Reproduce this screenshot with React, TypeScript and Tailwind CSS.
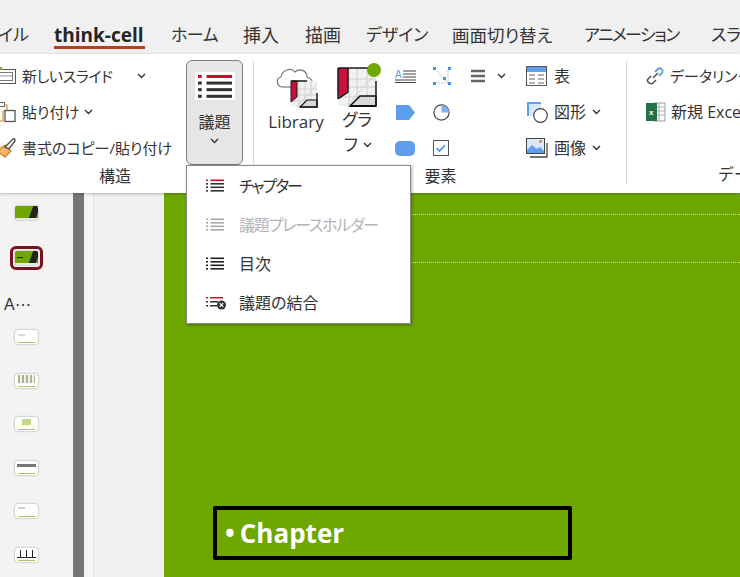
import React from "react";

const JP = "font-['Open_Sans','Noto_Sans_CJK_JP',sans-serif]";

function Chev({ className = "" }: { className?: string }) {
  return (
    <svg width="9" height="6" viewBox="0 0 9 6" className={`shrink-0 ${className}`}>
      <path d="M1 1l3.5 3.5L8 1" fill="none" stroke="#333" strokeWidth="1.4" />
    </svg>
  );
}

function ListIcon({ top = "#c8102e", rest = "#333", w = 18, dots = "#333" }: { top?: string; rest?: string; w?: number; dots?: string }) {
  return (
    <svg width={w} height={(w * 13) / 18} viewBox="0 0 18 13" className="shrink-0">
      <rect x="0" y="0.5" width="2" height="1.6" fill={top} />
      <rect x="4.5" y="0.5" width="13.5" height="1.6" fill={top} />
      {[4, 7.5, 11].map((y) => (
        <g key={y}>
          <rect x="0" y={y} width="2" height="1.6" fill={dots} />
          <rect x="4.5" y={y} width="13.5" height="1.6" fill={rest} />
        </g>
      ))}
    </svg>
  );
}

function GraphIcon({ size }: { size: number }) {
  return (
    <svg width={size} height={size} viewBox="0 0 40 40" className="shrink-0">
      <rect x="1" y="1" width="38" height="38" fill="#f1f1f1" />
      <path d="M12 1v38M20 1v38M30 1v38M1 12h38M1 20h38M1 30h38M10 39L39 6" stroke="#d0d0d0" strokeWidth="1" fill="none" />
      <path d="M13 39l10-10h16v10z" fill="#d9d9d9" stroke="#111" strokeWidth="1.5" />
      <path d="M1 1h10v24L1 32z" fill="#c8103c" />
      <path d="M1 1h30M39 14v25" fill="none" stroke="#1a1a1a" strokeWidth="1.5" />
      <path d="M1 32V1M11 1v24L1 32" fill="none" stroke="#1a1a1a" strokeWidth="1.5" />
      <path d="M39 39H13" stroke="#111" strokeWidth="2" />
    </svg>
  );
}

function LibraryIcon() {
  return (
    <svg width="42" height="42" viewBox="0 0 42 42" className="shrink-0 ml-[2px]">
      <path d="M6 21C0 20 0 12 5 11C6 4 15 1 19 6C23 2 31 4 31 11C33 12 36 13 36 15" fill="none" stroke="#777" strokeWidth="1.2" />
      <path d="M6 21h10" stroke="#777" strokeWidth="1.2" />
      <g transform="translate(15 15)">
        <rect x="0" y="0" width="26" height="26" fill="#f1f1f1" />
        <path d="M8 0v26M14 0v26M20 0v26M0 8h26M0 14h26M0 20h26M6 26L26 3" stroke="#d0d0d0" strokeWidth="1" fill="none" />
        <path d="M9 26l7-7h10v7z" fill="#d9d9d9" stroke="#111" strokeWidth="1.2" />
        <path d="M0 0h6v16L0 21z" fill="#c8103c" stroke="#1a1a1a" strokeWidth="1" />
        <path d="M0 0h16M26 12v14H9" fill="none" stroke="#1a1a1a" strokeWidth="1.5" />
      </g>
    </svg>
  );
}

function Thumb({ kind }: { kind: number }) {
  if (kind === 0 || kind === 1) {
    return (
      <div className="w-[23px] h-[14px] rounded-[2px] bg-[#6ea700] shadow-[0_0_2px_#999] border-b-2 border-[#e8e8e8] flex items-center justify-end overflow-hidden">
        {kind === 1 && <div className="w-[6px] h-[1px] bg-[#222] mr-auto ml-[2px]" />}
        <div className="w-[7px] h-[12px] bg-[#222] skew-x-[-20deg]" />
      </div>
    );
  }
  const inner: Record<number, React.ReactNode> = {
    2: <div className="w-[7px] h-[2px] mt-[4px] ml-[3px] bg-[#ddd]" />,
    3: <div className="w-[17px] h-[8px] mt-[1px] mx-auto bg-[repeating-linear-gradient(90deg,#aab590_0_2px,#f2f2f2_2px_4px)]" />,
    4: <div className="w-[9px] h-[6px] mt-[2px] mx-auto bg-[#c3d68e]" />,
    5: <div className="w-[19px] h-[3px] mt-[3px] mx-auto bg-[#777]" />,
    6: <div className="w-[7px] h-[2px] mt-[3px] ml-[3px] bg-[#ccc]" />,
    7: (
      <div className="relative h-[8px] mt-[2px] mx-[2px] flex justify-around border-b border-[#222]">
        <div className="w-[1px] h-[8px] bg-[#222]" />
        <div className="w-[1px] h-[8px] bg-[#222]" />
        <div className="w-[1px] h-[8px] bg-[#222]" />
      </div>
    ),
  };
  return (
    <div className="w-[23px] h-[14px] rounded-[3px] bg-white shadow-[0_0_2px_#888] overflow-hidden flex flex-col justify-between">
      <div>{inner[kind]}</div>
      <div className="h-[1px] mx-[3px] bg-[#a9c65e] mb-[1px]" />
    </div>
  );
}

function Row({ icon, text, chev, gap = "ml-[8px]", tracking = "" }: { icon: React.ReactNode; text: string; chev?: boolean; gap?: string; tracking?: string }) {
  return (
    <div className="h-[36px] flex items-center text-[15px] text-[#333] whitespace-nowrap [font-feature-settings:'palt']">
      <div className="w-[20px] h-[24px] flex items-center justify-end shrink-0">{icon}</div>
      <span className={`ml-[6px] ${tracking}`}>{text}</span>
      {chev && <Chev className={gap} />}
    </div>
  );
}

const menuItems = [
  { t: "チャプター", c: "tracking-[-2px]", i: <ListIcon /> },
  { t: "議題プレースホルダー", c: "tracking-[-1.2px]", i: <ListIcon top="#a8a8a8" rest="#a8a8a8" dots="#a8a8a8" />, off: true },
  { t: "目次", c: "", i: <ListIcon top="#222" rest="#222" dots="#222" /> },
  {
    t: "議題の結合",
    c: "",
    i: (
      <svg width="20" height="14" viewBox="0 0 20 14" className="shrink-0">
        <rect x="0" y="1" width="2" height="1.5" fill="#c8103c" />
        <rect x="4" y="1" width="13" height="1.5" fill="#c8103c" />
        <rect x="0" y="5" width="2" height="1.5" fill="#333" />
        <rect x="4" y="5" width="8" height="1.5" fill="#333" />
        <rect x="0" y="9" width="2" height="1.5" fill="#333" />
        <rect x="4" y="9" width="7" height="1.5" fill="#333" />
        <circle cx="15.5" cy="9" r="4.5" fill="#333" />
        <path d="M13.7 7.2l3.6 3.6M17.3 7.2l-3.6 3.6" stroke="#fff" strokeWidth="1.2" />
      </svg>
    ),
  },
];

export default function App() {
  return (
    <div className={`relative w-[740px] h-[577px] overflow-hidden bg-[#f0f0f0] ${JP}`}>
      {/* tabs */}
      <div className="h-[54px] flex pt-[23px] text-[18px] text-[#333] whitespace-nowrap [font-feature-settings:'palt'] leading-[24px]">
        <span className="w-[29px] overflow-hidden flex justify-end shrink-0"><span className="shrink-0 text-[17px]">ファイル</span></span>
        <span className="ml-[25px] relative font-bold text-[#262626] font-['Open_Sans',sans-serif] text-[19px] w-[91px] shrink-0">
          think-cell
          <span className="absolute left-0 right-0 top-[23px] h-[2.5px] bg-[#b5401f]" />
        </span>
        <span className="ml-[26px] w-[46px] shrink-0 text-[17px] tracking-[-0.6px]">ホーム</span>
        <span className="ml-[26px] w-[36px] shrink-0">挿入</span>
        <span className="ml-[26px] w-[36px] shrink-0">描画</span>
        <span className="ml-[25px] w-[61px] shrink-0 text-[17px]">デザイン</span>
        <span className="ml-[25px] w-[102px] shrink-0 text-[17.5px]">画面切り替え</span>
        <span className="ml-[30px] w-[94px] shrink-0 text-[17px] tracking-[-1.6px]">アニメーション</span>
        <span className="ml-[33px] text-[17px]">スライド ショー</span>
      </div>

      {/* ribbon */}
      <div className="h-[139px] bg-white flex relative z-10 shadow-[0_1px_3px_rgba(0,0,0,0.25)]">
        {/* group 1 */}
        <div className="w-[253px] shrink-0 flex flex-col">
          <div className="flex-1 flex">
            <div className="w-[186px] shrink-0 pt-[4px] flex flex-col">
              <div className="-ml-[4px]">
                <Row
                  text="新しいスライド"
                  tracking="tracking-[-0.4px]"
                  chev
                  gap="ml-[24px]"
                  icon={
                    <svg width="20" height="20" viewBox="0 0 20 20" className="shrink-0">
                      <rect x="0.5" y="3.5" width="19" height="14" fill="#fff" stroke="#555" />
                      <rect x="3.5" y="6.5" width="13" height="8" fill="#fff" stroke="#777" />
                      <path d="M4 10h12" stroke="#999" />
                      <rect x="0" y="1" width="6" height="3" fill="#7aa73a" />
                    </svg>
                  }
                />
                <Row
                  text="貼り付け"
                  chev
                  gap="ml-[5px]"
                  icon={
                    <svg width="20" height="22" viewBox="0 0 20 22" className="shrink-0">
                      <path d="M1 4h10v6H7v10H1z" fill="#fff" stroke="#e08a2c" strokeWidth="1.2" />
                      <rect x="3.5" y="1.5" width="5" height="4" fill="#fff" stroke="#666" />
                      <rect x="9" y="9.5" width="10" height="11" fill="#fff" stroke="#555" strokeWidth="1.3" />
                    </svg>
                  }
                />
                <Row
                  text="書式のコピー/貼り付け"
                  icon={
                    <svg width="20" height="22" viewBox="0 0 20 22" className="shrink-0">
                      <path d="M1 14l8-6 6 6-6 6z" fill="#f2b36a" stroke="#d97a1f" strokeWidth="1.2" />
                      <path d="M9 10l8-8c2-1 2 1 2 2l-6 8z" fill="#fff" stroke="#444" strokeWidth="1.3" />
                    </svg>
                  }
                />
              </div>
            </div>
            <div className="pt-[6px]">
              <div className="w-[57px] h-[105px] rounded-[6px] border border-[#7d7d7d] bg-[#e6e6e6] flex flex-col items-center pt-[11px] text-[16px] text-[#333]">
                <div className="w-[40px] h-[28px] bg-white flex items-center justify-center">
                  <ListIcon w={34} />
                </div>
                <span className="mt-[10px] leading-[24px]">議題</span>
                <Chev className="mt-[4px]" />
              </div>
            </div>
          </div>
          <div className="h-[29px] text-center pr-[23px] text-[16px] text-[#333] leading-[20px] pb-[7px]">構造</div>
        </div>

        <div className="w-[1px] h-[124px] mt-[7px] bg-[#d8d8d8] shrink-0" />

        {/* group 2 */}
        <div className="w-[372px] shrink-0 flex flex-col">
          <div className="flex-1 flex pt-[4px]">
            <div className="w-[82px] shrink-0 flex flex-col items-center pl-[2px] pt-[8px]">
              <LibraryIcon />
              <span className="text-[17px] text-[#333] leading-[22px] mt-[3px]">Library</span>
            </div>
            <div className="w-[48px] shrink-0 flex flex-col items-center relative pt-[9px] -ml-[3px]">
              <GraphIcon size={40} />
              <span className="absolute left-[34px] top-[5px] w-[14px] h-[14px] rounded-full bg-[#6fa800]" />
              <span className="text-[17px] text-[#333] leading-[26px] [font-feature-settings:'palt']">グラ</span>
              <span className="flex items-center text-[17px] text-[#333] leading-[26px] -mt-[1px]">
                フ<Chev className="ml-[3px]" />
              </span>
            </div>
            <div className="w-[38px] ml-[14px] shrink-0 flex flex-col">
              <div className="h-[36px] flex items-center">
                <svg width="22" height="14" viewBox="0 0 22 14" className="shrink-0">
                  <text x="0" y="9" fontSize="10" fill="#5b9bea" fontFamily="Liberation Sans">A</text>
                  <path d="M8 2h13M8 5h13M8 8h13M0 11h21M0 13.5h21" stroke="#444" strokeWidth="1" />
                </svg>
              </div>
              <div className="h-[36px] flex items-center">
                <svg width="21" height="17" viewBox="0 0 21 17" className="shrink-0"><path d="M1 1h13l6 7.5-6 7.5H1z" fill="#5f9eee" /></svg>
              </div>
              <div className="h-[36px] flex items-center">
                <div className="w-[20px] h-[15px] rounded-[5px] bg-[#5f9eee]" />
              </div>
            </div>
            <div className="w-[38px] shrink-0 flex flex-col">
              <div className="h-[36px] flex items-center">
                <svg width="18" height="18" viewBox="0 0 18 18" className="shrink-0">
                  <path d="M2 2L15 16M2 16h13V2" fill="none" stroke="#999" strokeWidth="0.8" strokeDasharray="1.5 1.5" />
                  <rect x="0" y="0" width="3" height="3" fill="#4a90e2" />
                  <rect x="15" y="0" width="3" height="3" fill="#4a90e2" />
                  <rect x="0" y="15" width="3" height="3" fill="#4a90e2" />
                  <rect x="15" y="15" width="3" height="3" fill="#4a90e2" />
                  <rect x="10" y="10" width="3" height="3" fill="#4a90e2" />
                </svg>
              </div>
              <div className="h-[36px] flex items-center">
                <svg width="17" height="17" viewBox="0 0 17 17" className="shrink-0">
                  <circle cx="8.5" cy="8.5" r="7.6" fill="#fff" stroke="#444" strokeWidth="1.2" />
                  <path d="M8.5 8.5V1a7.5 7.5 0 0 1 7.5 7.5z" fill="#7db0ee" />
                </svg>
              </div>
              <div className="h-[36px] flex items-center">
                <svg width="16" height="16" viewBox="0 0 16 16" className="shrink-0">
                  <rect x="0.5" y="0.5" width="15" height="15" fill="#fff" stroke="#555" />
                  <path d="M3.5 8l3 3 5.5-6" fill="none" stroke="#4a90e2" strokeWidth="1.6" />
                </svg>
              </div>
            </div>
            <div className="w-[55px] shrink-0">
              <div className="h-[36px] flex items-center">
                <svg width="14" height="14" viewBox="0 0 14 14" className="shrink-0">
                  <path d="M0 2h14M0 7h14M0 12h14" stroke="#666" strokeWidth="2.4" />
                </svg>
                <Chev className="ml-[12px]" />
              </div>
            </div>
            <div className="shrink-0 flex flex-col text-[16px] text-[#333] whitespace-nowrap">
              <div className="h-[36px] flex items-center">
                <svg width="21" height="20" viewBox="0 0 21 20" className="shrink-0">
                  <rect x="0.5" y="0.5" width="20" height="19" fill="#fff" stroke="#555" />
                  <rect x="1" y="1" width="19" height="5" fill="#5f9eee" />
                  <path d="M3 9h6M12 9h6M3 13h6M12 13h6M3 17h6M12 17h6" stroke="#666" />
                </svg>
                <span className="ml-[7px]">表</span>
              </div>
              <div className="h-[36px] flex items-center">
                <svg width="22" height="22" viewBox="0 0 22 22" className="shrink-0">
                  <rect x="1" y="1" width="14" height="14" fill="#5f9eee" />
                  <rect x="3" y="3" width="12" height="12" fill="#d8e7fa" />
                  <circle cx="14.5" cy="14.5" r="6.8" fill="#fff" stroke="#444" strokeWidth="1.2" />
                </svg>
                <span className="ml-[6px]">図形</span>
                <Chev className="ml-[6px]" />
              </div>
              <div className="h-[36px] flex items-center">
                <svg width="22" height="20" viewBox="0 0 22 20" className="shrink-0">
                  <path d="M21 5v14H4" fill="none" stroke="#444" strokeWidth="1.3" />
                  <rect x="0.5" y="0.5" width="18" height="15" fill="#dbe9fb" stroke="#444" />
                  <path d="M1 12l5-5 5 4 3-2 4 4v2H1z" fill="#5f9eee" />
                  <rect x="13" y="2" width="3" height="3" fill="#e8913a" />
                </svg>
                <span className="ml-[6px]">画像</span>
                <Chev className="ml-[6px]" />
              </div>
            </div>
          </div>
          <div className="h-[29px] text-center text-[16px] pl-[1px] text-[#333] leading-[20px] pb-[7px]">要素</div>
        </div>

        <div className="w-[1px] h-[124px] mt-[7px] bg-[#d8d8d8] shrink-0" />

        {/* group 3 */}
        <div className="flex-1 min-w-0 flex flex-col overflow-hidden">
          <div className="flex-1 pt-[4px] pl-[19px] text-[15px] text-[#333] whitespace-nowrap [font-feature-settings:'palt']">
            <div className="h-[36px] flex items-center">
              <svg width="19" height="18" viewBox="0 0 19 18" className="shrink-0">
                <path d="M9 5l3-3c2-2 6 1 4 4l-3 3" fill="none" stroke="#5f9eee" strokeWidth="1.8" />
                <path d="M10 13l-3 3c-2 2-7-1-5-4l3-3M7 11l5-5" fill="none" stroke="#555" strokeWidth="1.6" />
              </svg>
              <span className="ml-[5px]">データリンク</span>
            </div>
            <div className="h-[36px] flex items-center">
              <svg width="20" height="20" viewBox="0 0 20 20" className="shrink-0">
                <rect x="8" y="1" width="11" height="18" fill="#fff" stroke="#999" />
                <path d="M8 5h11M8 9h11M8 13h11M13 1v18" stroke="#aaa" />
                <rect x="0" y="1" width="11" height="18" fill="#217346" />
                <text x="3" y="13" fontSize="8" fontWeight="700" fill="#fff" fontFamily="Liberation Sans">x</text>
              </svg>
              <span className="ml-[5px] text-[16px]">新規 Excel</span>
            </div>
          </div>
          <div className="h-[29px] pl-[91px] text-[16px] text-[#333] leading-[20px] pb-[7px] whitespace-nowrap">データ</div>
        </div>

        {/* dropdown menu */}
        <div className="absolute left-[186px] top-[111px] w-[225px] h-[159px] bg-white border border-[#8a8a8a] shadow-[1px_1px_3px_rgba(0,0,0,0.35)] z-20 [font-feature-settings:'palt']">
          {menuItems.map((m) => (
            <div key={m.t} className="h-[39px] flex items-center pl-[19px] text-[16px]">
              <div className="w-[20px] flex items-center shrink-0">{m.i}</div>
              <span className={`ml-[13px] whitespace-nowrap ${m.c} ${m.off ? "text-[#b4b4b4]" : "text-[#333]"}`}>{m.t}</span>
            </div>
          ))}
        </div>
      </div>

      {/* body */}
      <div className="h-[384px] flex">
        <div className="w-[73px] shrink-0 bg-[#f3f3f3] flex flex-col items-center pr-[20px] pt-[13px] overflow-hidden">
          <Thumb kind={0} />
          <div className="mt-[26px] rounded-[6px] border-[3px] border-[#7a1020] p-[2px] flex">
            <Thumb kind={1} />
          </div>
          <div className="mt-[25px] self-start pl-[4px] text-[16px] leading-[20px] text-[#333] font-['Liberation_Sans',sans-serif]">A⋯</div>
          <div className="mt-[15px] flex flex-col gap-[29.5px]">
            <Thumb kind={2} />
            <Thumb kind={3} />
            <Thumb kind={4} />
            <Thumb kind={5} />
            <Thumb kind={6} />
            <Thumb kind={7} />
          </div>
        </div>
        <div className="w-[11px] shrink-0 bg-[#757575]" />
        <div className="w-[9px] shrink-0 bg-[#f6f6f6]" />
        <div className="w-[1px] shrink-0 bg-[#e2e2e2]" />
        <div className="w-[70px] shrink-0 bg-[#f0f0f0]" />
        <div className="flex-1 bg-[#6ea700] pt-[21px] flex flex-col">
          <div className="ml-[22px] border-t border-dotted border-white/70" />
          <div className="ml-[22px] mt-[47px] border-t border-dotted border-white/70" />
          <div className="ml-[49px] mt-[243px] w-[359px] h-[54px] border-[4px] border-black rounded-[2px] flex items-center pl-[8px] text-white font-bold text-[26px] font-['Open_Sans',sans-serif] leading-none">
            <span className="text-[26px] mr-[5px]">•</span>Chapter
          </div>
        </div>
      </div>
    </div>
  );
}
